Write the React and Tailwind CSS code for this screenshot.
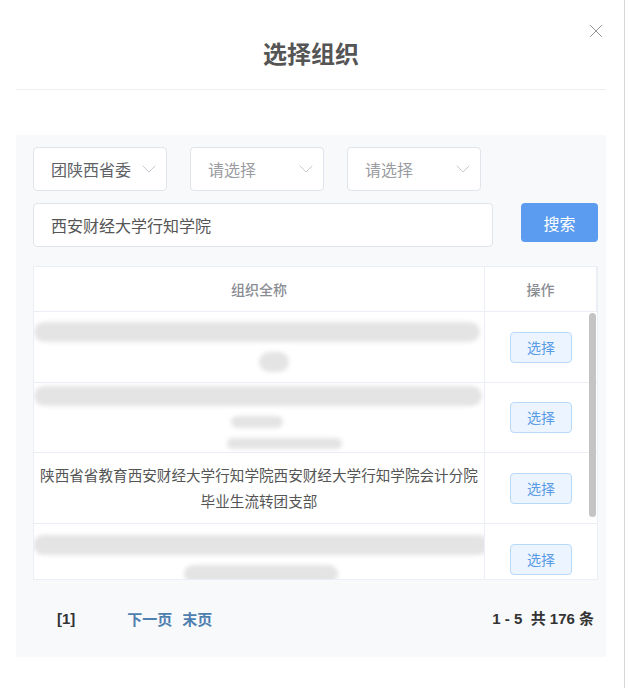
import { ChevronDown, X } from 'lucide-react';

const cjk = { fontFamily: '"Noto Sans CJK SC", "Noto Sans", sans-serif' };
const latin = { fontFamily: '"Liberation Sans", "Noto Sans CJK SC", sans-serif' };

// blurred redaction smudges, [widthPx, heightPx, offsetX]
const rows = [
  { h: 71, smudges: [[446, 20, -4], [30, 20, 30]] },
  { h: 70, smudges: [[448, 20, -2], [52, 12, -4], [115, 11, 50]] },
  { h: 71, text: ['陕西省省教育西安财经大学行知学院西安财经大学行知学院会计分院', '毕业生流转团支部'] },
  { h: 71, smudges: [[456, 20, 4], [154, 18, 4]] },
];

function Select({ value, placeholder }) {
  return (
    <div className="w-[134px] h-[44px] bg-white border border-[#e1e4ea] rounded-[4px] flex items-center pl-[17px] pr-[5px]">
      <span className={`flex-1 text-[16px] ${value ? 'text-[#606266]' : 'text-[#9a9ca1]'}`}>{value || placeholder}</span>
      <ChevronDown className="w-[24px] h-[24px] text-[#c6c9cf]" strokeWidth={1} />
    </div>
  );
}

function Row({ row }) {
  return (
    <div className="flex border-b border-[#ebeef5]" style={{ height: row.h }}>
      <div className="w-[451px] border-r border-[#ebeef5] flex flex-col items-center justify-center gap-[10px] overflow-hidden">
        {row.text
          ? row.text.map((t) => (
              <p key={t} className="text-[14.6px] leading-[16px] text-[#555] text-center whitespace-nowrap">{t}</p>
            ))
          : row.smudges.map(([w, h, dx], i) => (
              <div
                key={i}
                className="bg-[#e4e4e4] rounded-[10px] blur-[2px]"
                style={{ width: w, height: h, marginLeft: dx }}
              />
            ))}
      </div>
      <div className="w-[112px] flex items-center justify-center">
        <button className="w-[62px] h-[31px] rounded-[4px] bg-[#ecf5ff] border border-[#b9d9fb] text-[#5a9be6] text-[14px]">
          选择
        </button>
      </div>
    </div>
  );
}

export default function App() {
  return (
    <div className="relative w-[628px] h-[688px] bg-white overflow-hidden" style={cjk}>
      <div className="absolute right-[3px] top-0 bottom-0 w-px bg-[#d8d8d8]" />
      <button className="absolute left-[585px] top-[20px] text-[#8c8c8c]">
        <X className="w-[22px] h-[22px]" strokeWidth={1} />
      </button>

      <div className="mx-4 mr-[22px] h-[90px] border-b border-[#eeeeee] flex justify-center pt-[37px]">
        <h1 className="text-[24px] leading-[32px] font-bold text-[#555]">选择组织</h1>
      </div>

      <div className="ml-4 mr-[22px] mt-[45px] h-[522px] bg-[#f7f9fb] pl-[17px] pr-[8px] pt-[12px]">
        <div className="flex gap-[23px]">
          <Select value="团陕西省委" />
          <Select placeholder="请选择" />
          <Select placeholder="请选择" />
        </div>

        <div className="flex items-start mt-[12px]">
          <div className="w-[460px] h-[44px] bg-white border border-[#e1e4ea] rounded-[4px] flex items-center pl-[17px] text-[16px] text-[#555]">
            西安财经大学行知学院
          </div>
          <button className="ml-[28px] w-[77px] h-[39px] rounded-[4px] bg-[#5b9cf0] text-white text-[16px]">
            搜索
          </button>
        </div>

        <div className="mt-[19px] w-[565px] h-[314px] bg-white border border-[#ebeef5] flex flex-col">
          <div className="flex h-[45px] shrink-0 border-b border-[#ebeef5]">
            <div className="w-[451px] border-r border-[#ebeef5] flex items-center justify-center text-[14px] text-[#8a8d93] font-medium">
              组织全称
            </div>
            <div className="w-[112px] border-r border-[#ebeef5] flex items-center justify-center text-[14px] text-[#8a8d93] font-medium">
              操作
            </div>
          </div>
          <div className="relative flex-1 min-h-0 overflow-hidden">
            {rows.map((r, i) => (
              <Row key={i} row={r} />
            ))}
            {/* scrollbar thumb over the rows */}
            <div className="absolute right-[1px] top-[1px] w-[7px] h-[204px] rounded-full bg-[#c4c4c4]" />
          </div>
        </div>

        <div className="flex items-center h-[78px] pl-[24px] pr-[4px] text-[15px] font-bold" style={latin}>
          <span className="text-[#333]">[1]</span>
          <span className="ml-[52px] text-[#4f7fae]" style={cjk}>下一页</span>
          <span className="ml-[10px] text-[#4f7fae]" style={cjk}>末页</span>
          <span className="ml-auto text-[#333] whitespace-pre">1 - 5  共 176 条</span>
        </div>
      </div>
    </div>
  );
}
